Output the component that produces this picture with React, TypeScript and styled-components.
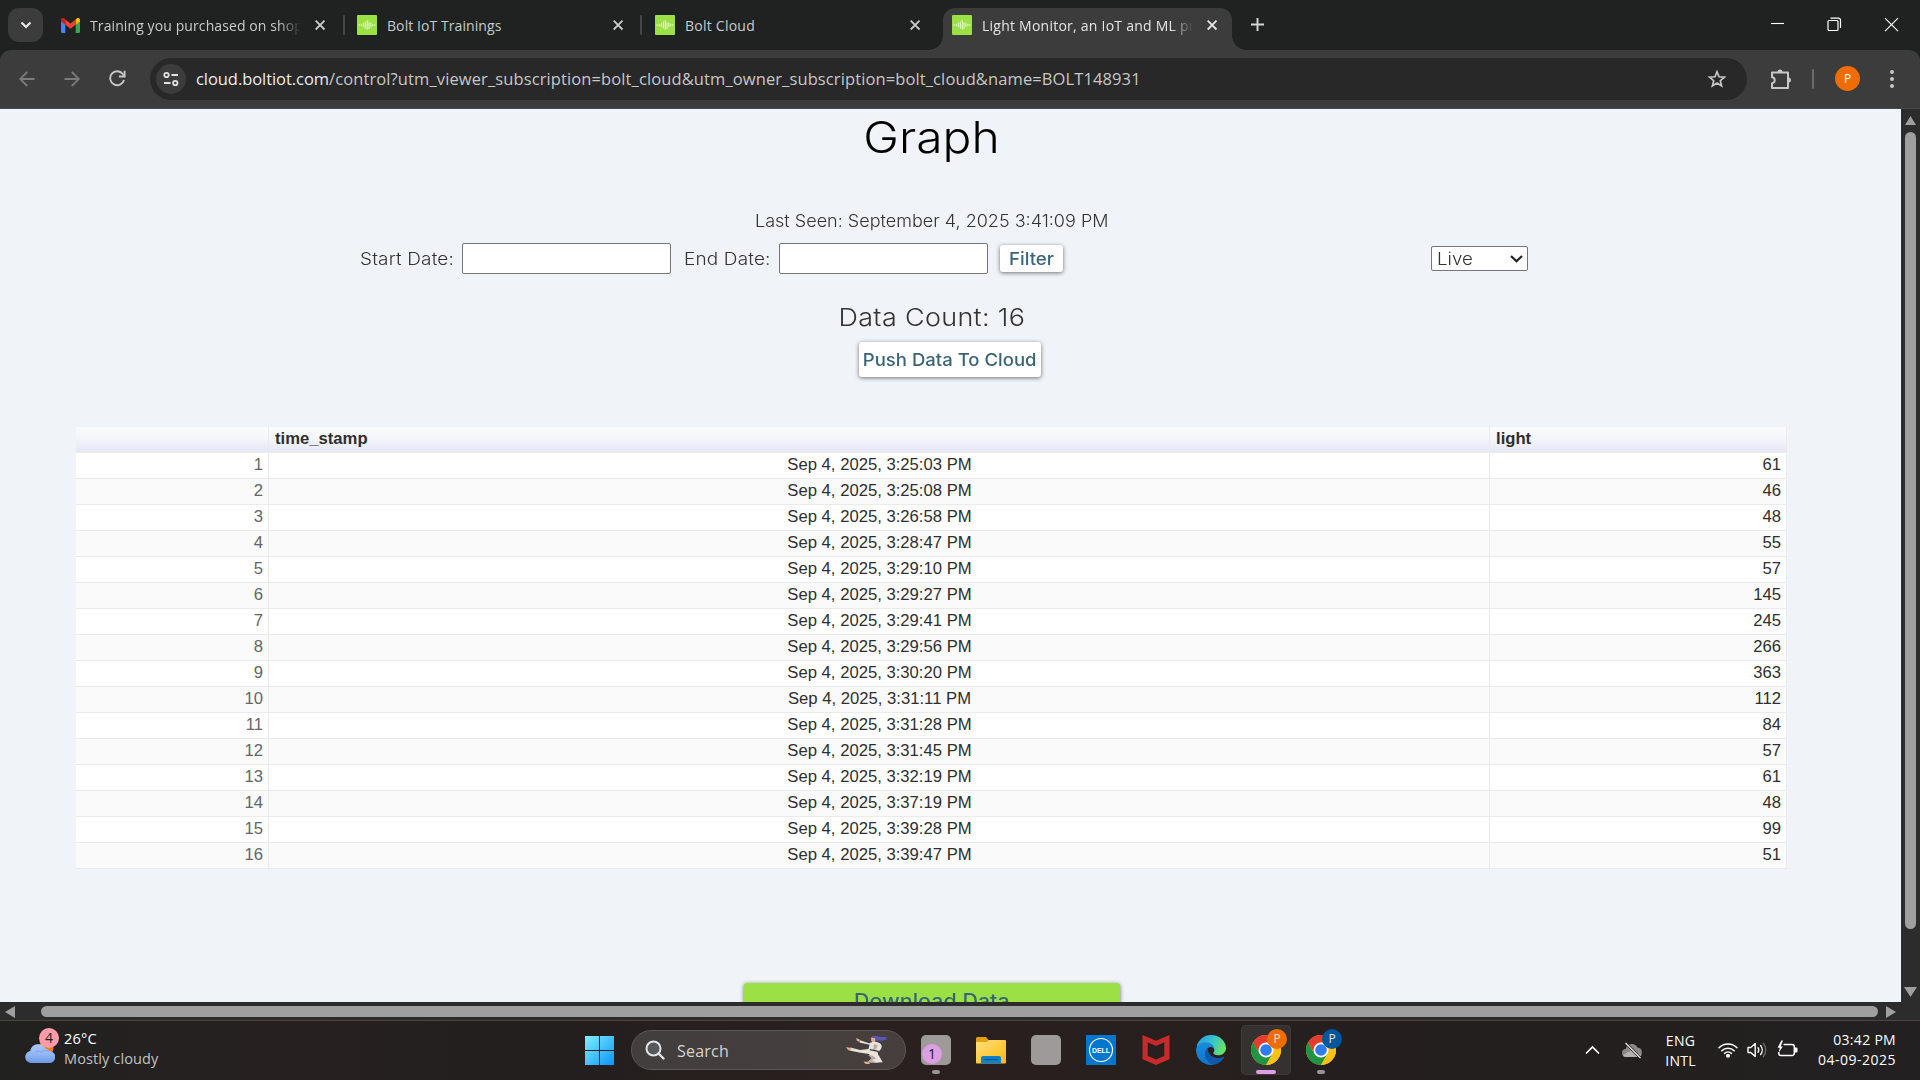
import React from "react";
import styled, { createGlobalStyle, css } from "styled-components";

const UI = `"Open Sans", "Noto Sans", sans-serif`;
const BODY = `Inter, "Open Sans", sans-serif`;

const GlobalStyle = createGlobalStyle`
  *, *::before, *::after { box-sizing: border-box; }
  html, body { margin: 0; padding: 0; background: #202221; overflow: hidden; }
  svg { display: block; flex: none; }
`;

const Screen = styled.div`
  width: 1920px;
  height: 1080px;
  display: flex;
  flex-direction: column;
  overflow: hidden;
  background: #202221;
  font-family: ${UI};
`;

/* ---------- tab strip ---------- */

const TabStrip = styled.header`
  flex: none;
  height: 50px;
  display: flex;
  align-items: flex-start;
  padding: 8px 0 0 8px;
`;

const TabSearch = styled.button`
  width: 35px;
  height: 34px;
  margin: 0 8px 0 0;
  padding: 0;
  border: 0;
  border-radius: 11px;
  background: #3c3c3c;
  display: grid;
  place-items: center;
`;

const Tab = styled.div<{ $width: number; $left: number; $right: number; $active?: boolean }>`
  position: relative;
  flex: none;
  width: ${(p) => p.$width}px;
  height: 42px;
  padding: 0 ${(p) => p.$right}px 8px ${(p) => p.$left}px;
  display: flex;
  align-items: center;
  color: #c9cac9;
  ${(p) =>
    p.$active
      ? css`
          background: #3c3c3c;
          color: #e6e6e6;
          border-radius: 12px 12px 0 0;
          &::before, &::after {
            content: "";
            position: absolute;
            bottom: 0;
            width: 14px;
            height: 14px;
          }
          &::before {
            left: -14px;
            background: radial-gradient(circle at 0 0, transparent 13.5px, #3c3c3c 14px);
          }
          &::after {
            right: -14px;
            background: radial-gradient(circle at 100% 0, transparent 13.5px, #3c3c3c 14px);
          }
        `
      : ""}
`;

const TabDivider = styled.i`
  flex: none;
  width: 2px;
  height: 20px;
  margin: 7px 0 0 -2px;
  border-radius: 1px;
  background: #454746;
`;

const TabTitle = styled.span<{ $spacing: number; $faded?: boolean }>`
  flex: 1;
  min-width: 0;
  margin: 1px 13px 0 10px;
  overflow: hidden;
  white-space: nowrap;
  font-size: 14px;
  line-height: 24px;
  letter-spacing: ${(p) => p.$spacing}px;
  ${(p) => (p.$faded ? "mask-image: linear-gradient(90deg, #000 calc(100% - 22px), transparent);" : "")}
`;

const NewTab = styled.button`
  margin: 9px 0 0 18px;
  padding: 0;
  border: 0;
  background: none;
  color: #d5d5d5;
`;

const WindowControls = styled.div`
  margin: 8px 21px 0 auto;
  display: flex;
  gap: 42px;
  color: #fff;
`;

/* ---------- toolbar ---------- */

const Toolbar = styled.div`
  flex: none;
  height: 59px;
  display: flex;
  align-items: center;
  padding: 0 21px 1px 16px;
  border-radius: 11px 11px 0 0;
  border-bottom: 1px solid #4a4a4a;
  background: #3c3c3c;
  color: #c7c7c7;
`;

const NavButtons = styled.div`
  display: flex;
  gap: 23px;
  margin-right: 22px;
`;

const NavButton = styled.span<{ $dim?: boolean }>`
  width: 22px;
  height: 22px;
  display: grid;
  place-items: center;
  color: ${(p) => (p.$dim ? "#7b7b7b" : "#c7c7c7")};
`;

const Omnibox = styled.div`
  flex: none;
  width: 1597px;
  height: 42px;
  display: flex;
  align-items: center;
  padding: 0 20px 0 6px;
  border-radius: 21px;
  background: #282828;
`;

const SiteInfo = styled.span`
  width: 30px;
  height: 30px;
  margin-right: 10px;
  border-radius: 50%;
  background: #3c3c3c;
  display: grid;
  place-items: center;
`;

const Url = styled.span`
  flex: 1;
  white-space: nowrap;
  font-size: 16.5px;
  line-height: 26px;
  letter-spacing: 0.11px;
  color: #c7c7c7;
`;

const Host = styled.span`
  letter-spacing: -0.06px;
  color: #ececec;
`;

const Extensions = styled.span`
  margin-left: 23px;
`;

const ToolbarDivider = styled.i`
  flex: none;
  width: 2px;
  height: 20px;
  margin: 0 21px 0 20px;
  border-radius: 1px;
  background: #6a6a6a;
`;

const Avatar = styled.span`
  flex: none;
  width: 25px;
  height: 25px;
  margin-right: auto;
  border-radius: 50%;
  background: #ef6c00;
  color: #fff;
  display: grid;
  place-items: center;
  font-size: 12px;
  line-height: 14px;
`;

const MenuDots = styled.span`
  margin-right: 5px;
`;

/* ---------- page ---------- */

const PageRow = styled.div`
  flex: none;
  height: 893px;
  display: flex;
  background: #2c2c2c;
`;

const Page = styled.main`
  width: 1901px;
  height: 893px;
  overflow: hidden;
  padding: 0 38px 0 0;
  display: flex;
  flex-direction: column;
  align-items: center;
  background: #f0f4f8;
  color: #333;
  font-family: ${BODY};
  font-weight: 300;
  font-size: 17px;
  & > * { flex: none; }
`;

/* Stretches a run of text to the broad proportions of the page's geometric face. */
const Wide = styled.span<{ $by: number; $from?: string }>`
  display: inline-block;
  white-space: nowrap;
  transform: scaleX(${(p) => p.$by});
  transform-origin: ${(p) => p.$from ?? "center"};
`;

const Title = styled.h1`
  margin: 0;
  height: 57px;
  font-size: 44px;
  font-weight: 300;
  line-height: 56px;
  color: #000;
`;

const LastSeen = styled.p`
  margin: 43px 0 9px;
  line-height: 25px;
`;

const FilterRow = styled.form`
  width: 1863px;
  height: 31px;
  padding-left: 360px;
  display: flex;
  align-items: center;
`;

const Label = styled.label<{ $width: number; $indent?: number }>`
  width: ${(p) => p.$width}px;
  padding-left: ${(p) => p.$indent ?? 0}px;
  white-space: nowrap;
  letter-spacing: 0.15px;
`;

const DateInput = styled.input`
  width: 209px;
  height: 31px;
  margin: 0;
  border: 1px solid #767676;
  border-radius: 2px;
  background: #fff;
`;

const RaisedButton = styled.button`
  padding: 0;
  border: 0;
  border-radius: 3px;
  background: #fff;
  box-shadow: 0 1px 4px rgba(0, 0, 0, 0.55);
  color: #3a6579;
  font-family: ${BODY};
  font-weight: 500;
  font-size: 17px;
  white-space: nowrap;
`;

const FilterButton = styled(RaisedButton)`
  width: 63px;
  height: 27px;
  margin: 0 0 0 12px;
`;

const Mode = styled.div`
  width: 97px;
  height: 25px;
  margin-left: 368px;
  padding: 0 4px 0 5px;
  display: flex;
  align-items: center;
  justify-content: space-between;
  border: 1px solid #767676;
  border-radius: 2px;
  background: #fff;
`;

const DataCount = styled.p`
  margin: 28px 0 10px;
  font-size: 24.5px;
  line-height: 30px;
  letter-spacing: 0.3px;
`;

const PushButton = styled(RaisedButton)`
  width: 182px;
  height: 35px;
  margin-left: 37px;
  display: flex;
  justify-content: center;
  align-items: center;
`;

const DownloadButton = styled(RaisedButton)`
  width: 376px;
  height: 36px;
  margin-top: 114px;
  background: #9be146;
  font-size: 19.5px;
`;

const Grid = styled.div`
  width: 1711px;
  margin-top: 50px;
  font-family: "Liberation Sans", Arial, sans-serif;
  font-weight: 400;
  font-size: 16.67px;
  line-height: 22px;
`;

const GridRow = styled.div<{ $even?: boolean; $head?: boolean }>`
  height: 26px;
  display: grid;
  grid-template-columns: 193px 1221px 297px;
  background: ${(p) =>
    p.$head ? "linear-gradient(#fafbfd 0%, #f5f6fb 45%, #e4e8f4 100%)" : p.$even ? "#fafafa" : "#fff"};
  border-bottom: 1px solid #ebebeb;
`;

const Cell = styled.div<{ $align?: string; $muted?: boolean; $bold?: boolean }>`
  padding: 1px 5px 0 6px;
  border-right: 1px solid #ebebeb;
  text-align: ${(p) => p.$align ?? "left"};
  color: ${(p) => (p.$muted ? "#666" : "#2f2f2f")};
  font-weight: ${(p) => (p.$bold ? 700 : 400)};
`;

/* ---------- scrollbars ---------- */

const VScroll = styled.div`
  width: 19px;
  display: flex;
  flex-direction: column;
  align-items: center;
  padding-top: 6px;
`;

const VThumb = styled.i`
  width: 11px;
  height: 797px;
  margin: 7px 0 58px;
  border-radius: 6px;
  background: #9f9f9f;
`;

const HScroll = styled.div`
  flex: none;
  height: 18px;
  display: flex;
  align-items: center;
  padding: 1px 0 0 5px;
  background: #2c2c2c;
`;

const HThumb = styled.i`
  width: 1837px;
  height: 11px;
  margin: 0 8px 0 26px;
  border-radius: 6px;
  background: #9f9f9f;
`;

/* ---------- taskbar ---------- */

const Taskbar = styled.footer`
  flex: none;
  height: 60px;
  display: flex;
  align-items: flex-start;
  border-top: 1px solid #474645;
  background: linear-gradient(90deg, #212120 0%, #262120 14%, #231f1e 28%, #2a201f 46%, #241f1e 72%, #222021 100%);
  color: #fff;
`;

const Weather = styled.div`
  width: 585px;
  display: flex;
  padding: 5px 0 0 25px;
`;

const WeatherIcon = styled.div`
  position: relative;
  width: 30px;
  height: 38px;
  padding-top: 8px;
  margin-right: 9px;
`;

const WeatherText = styled.div`
  padding-top: 3px;
`;

const Count = styled.span`
  position: absolute;
  left: 14px;
  top: 2px;
  width: 20px;
  height: 20px;
  border-radius: 50%;
  background: #ff9ca8;
  color: #222;
  font-size: 14px;
  line-height: 20px;
  text-align: center;
`;

const Stack = styled.div<{ $align?: string }>`
  display: flex;
  flex-direction: column;
  align-items: ${(p) => p.$align ?? "flex-start"};
`;

const Line = styled.span<{ $size?: number; $spacing?: number; $soft?: boolean }>`
  font-size: ${(p) => p.$size ?? 14}px;
  line-height: 20px;
  letter-spacing: ${(p) => p.$spacing ?? 0}px;
  color: ${(p) => (p.$soft ? "#c4c2c1" : "#fff")};
  white-space: nowrap;
`;

const Start = styled.div`
  padding-top: 15px;
`;

const SearchBox = styled.div`
  width: 275px;
  height: 40px;
  margin: 9px 0 0 17px;
  padding: 0 17px 0 13px;
  display: flex;
  align-items: center;
  border: 1px solid #5b5757;
  border-radius: 20px;
  background: linear-gradient(90deg, #423e3d, #463f3e);
`;

const SearchText = styled.span`
  flex: 1;
  margin: 1px 0 0 12px;
  color: #d6d4d3;
  font-size: 16px;
  letter-spacing: 0.22px;
`;

const TaskApp = styled.div<{ $active?: boolean }>`
  position: relative;
  width: 50px;
  height: 50px;
  margin: 4px 0 0 5px;
  padding-top: 10px;
  display: flex;
  flex-direction: column;
  align-items: center;
  border-radius: 5px;
  ${(p) => (p.$active ? "background: #353130; box-shadow: inset 0 0 0 1px #3f3b3a;" : "")}
`;

const Running = styled.i<{ $active?: boolean }>`
  width: ${(p) => (p.$active ? 20 : 8)}px;
  height: 4px;
  margin-top: 5px;
  border-radius: 2px;
  background: ${(p) => (p.$active ? "#dc9fe6" : "#999594")};
`;

const BlankApp = styled.span`
  width: 30px;
  height: 30px;
  border-radius: 5px;
  background: #9e9a99;
`;

const AppBadge = styled.span<{ $x: number; $y: number; $color: string; $dark?: boolean }>`
  position: absolute;
  left: ${(p) => p.$x}px;
  top: ${(p) => p.$y}px;
  width: 20px;
  height: 20px;
  border-radius: 50%;
  background: ${(p) => p.$color};
  color: ${(p) => (p.$dark ? "#221a22" : "#e8e4dc")};
  font-size: ${(p) => (p.$dark ? 14 : 12)}px;
  line-height: 20px;
  text-align: center;
`;

const Tray = styled.div`
  margin-left: auto;
  padding: 9px 24px 0 0;
  display: flex;
`;

const TrayItem = styled.div<{ $top: number; $gap: number }>`
  padding-top: ${(p) => p.$top}px;
  margin-right: ${(p) => p.$gap}px;
`;

/* ---------- drawings ---------- */

const Cross = () => (
  <svg width="12" height="12" viewBox="0 0 12 12" fill="none" stroke="currentColor" strokeWidth="1.8">
    <path d="M1.7 1.700l8.800 8.800M10.500 1.700l-8.800 8.800" />
  </svg>
);

const BoltIcon = () => (
  <svg width="20" height="20" viewBox="0 0 20 20">
    <rect width="20" height="20" rx="1" fill="#9be146" />
    <g stroke="#f4fbe6" strokeLinecap="round">
      <path strokeWidth="1.4" d="M2.2 10h.01M17.8 10h.01" />
      <path strokeWidth="0.9" d="M4.400 9.300v1.400M6.400 8.200v3.600M8.300 7v6M10.200 5.500v9M12 7.500v6M13.900 8.200v3.600M15.800 9.300v1.400" />
    </g>
  </svg>
);

const GmailIcon = () => (
  <svg width="19" height="15" viewBox="0 0 19 15">
    <path fill="#4285f4" d="M0 3v10.600A1.300 1.300 0 0 0 1.300 15h3V6z" />
    <path fill="#34a853" d="M14.700 15h3a1.300 1.300 0 0 0 1.300-1.400V3l-4.300 3z" />
    <path fill="#fbbc04" d="M14.700 1.500v5.300L19 3.600V2C19 .2 17-.8 15.600.5z" />
    <path fill="#c5221f" d="M0 2v1.600l4.300 3.200V1.500L3.400.5C2-.8 0 .2 0 2z" />
    <path fill="#ea4335" d="M4.300 6.800V1.500l5.200 3.900 5.200-3.900v5.300l-5.200 3.900z" />
  </svg>
);

const ChromeIcon = () => (
  <svg width="30" height="30" viewBox="0 0 48 48">
    <circle cx="24" cy="24" r="24" fill="#fbc116" />
    <path fill="#e33b2e" d="M3.200 12A24 24 0 0 1 44.800 12H24L13.600 30z" />
    <path fill="#229342" d="M3.200 12A24 24 0 0 0 24 48L34.400 30 24 24 13.600 30z" />
    <path fill="#fbc116" d="M24 48A24 24 0 0 0 44.800 12H24L34.400 30z" />
    <circle cx="24" cy="24" r="12" fill="#fff" />
    <circle cx="24" cy="24" r="9.300" fill="#2f7bf0" />
  </svg>
);

const EdgeIcon = () => (
  <svg width="30" height="30" viewBox="0 0 30 30">
    <defs>
      <linearGradient id="edgeTop" x1="0" y1="0.3" x2="1" y2="0.6">
        <stop offset="0" stopColor="#2a9fdc" />
        <stop offset="0.5" stopColor="#35c3cf" />
        <stop offset="1" stopColor="#6fe458" />
      </linearGradient>
      <linearGradient id="edgeLeft" x1="0.3" y1="0" x2="0.6" y2="1">
        <stop offset="0" stopColor="#1b8ddd" />
        <stop offset="1" stopColor="#0f72cf" />
      </linearGradient>
    </defs>
    <path fill="url(#edgeTop)" d="M.6 11.500C2.300 4.800 8 0 15 0c8.600 0 15 6.300 15 13 0 4.400-3.500 7.300-7.700 7.300-3.300 0-5-1.200-5-2.200 0-.7 1-1.200 1-3.100 0-3-3-5.600-7-5.600-4.600 0-8.300 1-10.700 2.100z" />
    <path fill="url(#edgeLeft)" d="M0 15C.2 10.500 4.500 7.200 9.500 7.200c5.200 0 8.800 3.300 8.800 7.300-.6-1.600-2-2.500-3.600-2.500-3 0-5.200 3.200-5.200 6.800 0 5 4 9.800 8.500 10.900C8.500 31.300 0 24.500 0 15z" />
    <path fill="#1058a8" d="M12 13.200C9.500 15 8.500 18 9 20.500 10 26 14.500 29.300 19 29.400c4-.9 7.200-3.400 9-6.700.4-.8-.2-1.200-.8-.9-1.500.8-3.200 1.200-5 1.200-5.500 0-10.200-3.600-10.200-8.200z" />
  </svg>
);

const FolderIcon = () => (
  <svg width="30" height="30" viewBox="0 0 30 30">
    <defs>
      <linearGradient id="folder" x1="0" y1="0" x2="1" y2="1">
        <stop offset="0" stopColor="#ffe07a" />
        <stop offset="1" stopColor="#fcb913" />
      </linearGradient>
    </defs>
    <path fill="#e0a010" d="M0 3.500A1.500 1.500 0 0 1 1.500 2H10l2.500 3H28v5H0z" />
    <path fill="url(#folder)" d="M0 7h10.500l2.500-2H29a1 1 0 0 1 1 1v21.500a1 1 0 0 1-1 1H1a1 1 0 0 1-1-1z" />
    <path fill="#127fcb" d="M5 28.500V23a2 2 0 0 1 2-2h16a2 2 0 0 1 2 2v5.500z" />
    <path stroke="#0b548c" strokeWidth="1.200" d="M8.500 24.500h13" />
  </svg>
);

const DellText = styled.text`
  font: 700 7.6px "Liberation Sans", Arial, sans-serif;
  fill: #fff;
`;

const DellIcon = () => (
  <svg width="30" height="30" viewBox="0 0 30 30">
    <rect width="30" height="30" fill="#0076ce" />
    <circle cx="15" cy="15" r="11.500" fill="none" stroke="#fff" strokeWidth="1.200" />
    <DellText x="15" y="17.700" textAnchor="middle" textLength="18" lengthAdjust="spacingAndGlyphs">DELL</DellText>
  </svg>
);

const ShieldIcon = () => (
  <svg width="30" height="30" viewBox="0 0 30 30">
    <path fill="#c62a2b" fillRule="evenodd" d="M1.500 0L15 5.800 28.500 0v24.200L15 30 1.500 24.200zM6.700 7.200v13.600L15 24.500l8.300-3.700V7.200L15 11z" />
  </svg>
);

const WindowsIcon = () => (
  <svg width="29" height="29" viewBox="0 0 29 29">
    <defs>
      <linearGradient id="win" gradientUnits="userSpaceOnUse" x1="0" y1="0" x2="29" y2="29">
        <stop offset="0" stopColor="#7ff0ff" />
        <stop offset="0.5" stopColor="#45c2fb" />
        <stop offset="1" stopColor="#0a93f8" />
      </linearGradient>
    </defs>
    <path fill="url(#win)" d="M0 0h14v14H0zM15 0h14v14H15zM0 15h14v14H0zM15 15h14v14H15z" />
  </svg>
);

const KickIcon = () => (
  <svg width="42" height="30" viewBox="0 0 42 30">
    <path fill="#5a56b4" d="M25 2.500C26.500.3 30 .2 32.500 1.500c3 .8 6 .3 8.800.6-2 .6-1.500 1.200-.3 1.700-2 1.800-5 2.300-8 1.800-2 .5-3.500.2-4.500-.7z" />
    <path fill="#e3ab88" d="M25.200 2.500l3.800.8.400 3.500-2.800.3-1.600-1.300z" />
    <path fill="#e9e3dd" d="M14 5.300l9 3 4.500-1.800c4 .3 7.500 1.700 8.200 4.200.4 2-2 5.500-3.700 6.500l1.500 4.500 3.200 5.600-3.700.2c-4 .6-8-.2-11.500.2l4-4.300-2.500-4.400-8.500-1.200-11-2.400.9-2.800L14 15l8.500-.9 1-4.300-10-2.200z" />
    <path fill="#b9a8a4" d="M22 20l4 .5 4.500 3-5 1.500 4 1.500-8 .5 4-3.800zM28 9l4 1.500-2.800 4.500-2-.3z" />
    <path stroke="#3a3435" strokeWidth="1.300" fill="none" d="M23.800 14.600l8.300 1.800 1 4" />
    <path fill="#e3ab88" d="M10.500 3l3.500 1.800-.6 2.300-3-1.800zM0 12l3.500.8 2 .2-.7 2.500-2.800-.6zM17.500 26.500l5 .2 1.500 2.300h-4.500z" />
  </svg>
);

const CloudIcon = () => (
  <svg width="30" height="29" viewBox="0 0 30 29">
    <defs>
      <linearGradient id="cloud" x1="0" y1="0" x2="0" y2="1">
        <stop offset="0" stopColor="#a9c8fb" />
        <stop offset="0.6" stopColor="#8fb4f4" />
        <stop offset="1" stopColor="#6c98e8" />
      </linearGradient>
    </defs>
    <circle cx="21" cy="14" r="7.500" fill="#f57c12" />
    <path fill="url(#cloud)" d="M6 29a6 6 0 0 1-.8-11.900A8.200 8.200 0 0 1 20.500 14.500 6.500 6.500 0 0 1 24.500 17 6 6 0 0 1 24 29z" />
    <path fill="none" stroke="#7ea6ee" strokeWidth="1" d="M10.500 18c2-1.500 5-1 6.500.7M16 19c1.500-2.600 5-3.700 8-2" />
  </svg>
);

const MutedCloud = () => (
  <svg width="21" height="17" viewBox="0 0 21 17">
    <path fill="#8b8988" d="M4.500 15a4 4 0 0 1-.8-8A6.300 6.300 0 0 1 15.500 5.500 4.800 4.800 0 0 1 16 15z" />
    <path fill="#b3b1b0" d="M1 13l9-5 9.500 5a4 4 0 0 1-3.500 2h-11A4 4 0 0 1 1 13z" />
    <path stroke="#242120" strokeWidth="2.600" d="M3.500 1L18.500 16" />
    <path stroke="#e8e8e8" strokeWidth="1.300" d="M3.500 1L18.500 16" />
  </svg>
);

const WifiIcon = () => (
  <svg width="20" height="16" viewBox="0 0 20 16" fill="none" stroke="#fff" strokeWidth="1.500" strokeLinecap="round">
    <path d="M1 5.800a12.800 12.800 0 0 1 18 0M3.800 8.700a8.800 8.800 0 0 1 12.400 0M6.600 11.400a4.900 4.900 0 0 1 6.800 0" />
    <circle cx="10" cy="13.800" r="1.300" fill="#fff" />
  </svg>
);

const SpeakerIcon = () => (
  <svg width="21" height="18" viewBox="0 0 21 18" fill="none" stroke="#fff" strokeWidth="1.400" strokeLinecap="round" strokeLinejoin="round">
    <path d="M1 6.500h2.800L8.200 2.500v13L3.800 11.500H1z" />
    <path d="M11 6.700a4 4 0 0 1 0 4.600M13.600 4.500a7 7 0 0 1 0 9" />
    <path stroke="#6b6968" d="M16.300 2.300a10.500 10.500 0 0 1 0 13.400" />
  </svg>
);

const BatteryIcon = () => (
  <svg width="21" height="18" viewBox="0 0 21 18" fill="none" stroke="#fff" strokeWidth="1.500">
    <path d="M6.500 4.500H15A2.300 2.300 0 0 1 17.300 6.800v6.400A2.300 2.300 0 0 1 15 15.500H4a2.300 2.300 0 0 1-2.300-2.300V12" />
    <path fill="#fff" stroke="none" d="M18 7.500h1.500q1 0 1 1v3q0 1-1 1H18zM4.300.5L.6 7.800h2.200L1.500 13 5.800 6.500H3.700L6 .5z" />
  </svg>
);

const Triangle = ({ dir }: { dir: "up" | "down" | "left" | "right" }) => {
  const d = {
    up: "M6.5 1L12 10H1z",
    down: "M0 0h13L6.500 10z",
    left: "M10 0v12L0 6z",
    right: "M0 0v12L10 6z",
  }[dir];
  const upright = dir === "up" || dir === "down";
  return (
    <svg width={upright ? 13 : 10} height={upright ? 10 : 12}>
      <path d={d} fill="#9f9f9f" />
    </svg>
  );
};

/* ---------- data ---------- */

const readings: [string, number][] = [
  ["3:25:03", 61], ["3:25:08", 46], ["3:26:58", 48], ["3:28:47", 55],
  ["3:29:10", 57], ["3:29:27", 145], ["3:29:41", 245], ["3:29:56", 266],
  ["3:30:20", 363], ["3:31:11", 112], ["3:31:28", 84], ["3:31:45", 57],
  ["3:32:19", 61], ["3:37:19", 48], ["3:39:28", 99], ["3:39:47", 51],
];

const BrowserTabs = () => (
  <TabStrip>
    <TabSearch>
      <svg width="12" height="8" viewBox="0 0 12 8" fill="none" stroke="#e8e8e8" strokeWidth="2.200">
        <path d="M1.500 1.500L6 6l4.500-4.500" />
      </svg>
    </TabSearch>
    <Tab $width={294} $left={10} $right={19}>
      <GmailIcon />
      <TabTitle $spacing={0.1} $faded>Training you purchased on shop</TabTitle>
      <Cross />
    </Tab>
    <TabDivider />
    <Tab $width={297} $left={12} $right={18}>
      <BoltIcon />
      <TabTitle $spacing={0.08}>Bolt IoT Trainings</TabTitle>
      <Cross />
    </Tab>
    <TabDivider />
    <Tab $width={301} $left={13} $right={22}>
      <BoltIcon />
      <TabTitle $spacing={0.24}>Bolt Cloud</TabTitle>
      <Cross />
    </Tab>
    <Tab $width={289} $left={9} $right={14} $active>
      <BoltIcon />
      <TabTitle $spacing={0.24} $faded>Light Monitor, an IoT and ML project</TabTitle>
      <Cross />
    </Tab>
    <NewTab>
      <svg width="15" height="15" viewBox="0 0 15 15" stroke="currentColor" strokeWidth="1.900">
        <path d="M7.500 1v13M1 7.500h13" />
      </svg>
    </NewTab>
    <WindowControls>
      <svg width="15" height="15" viewBox="0 0 15 15"><path d="M1 7.500h13" stroke="currentColor" strokeWidth="1.100" /></svg>
      <svg width="15" height="16" viewBox="0 0 15 16" fill="none" stroke="currentColor" strokeWidth="1.200">
        <rect x="1" y="4.500" width="10" height="10" rx="1" />
        <path d="M3.500 2.200H11.500a2 2 0 0 1 2 2V12" />
      </svg>
      <svg width="15" height="16" viewBox="0 0 15 16"><path d="M1 2.200L14 15.200M14 2.200L1 15.200" stroke="currentColor" strokeWidth="1.200" /></svg>
    </WindowControls>
  </TabStrip>
);

const AddressBar = () => (
  <Toolbar>
    <NavButtons>
      <NavButton $dim>
        <svg width="16" height="16" viewBox="0 0 16 16" fill="none" stroke="currentColor" strokeWidth="1.800"><path d="M15.500 8H1.500M8.200 1L1.200 8l7 7" /></svg>
      </NavButton>
      <NavButton $dim>
        <svg width="16" height="16" viewBox="0 0 16 16" fill="none" stroke="currentColor" strokeWidth="1.800"><path d="M.5 8h14M7.800 1l7 7-7 7" /></svg>
      </NavButton>
      <NavButton>
        <svg width="17" height="17" viewBox="0 0 17 17" fill="none" stroke="currentColor" strokeWidth="1.900">
          <path d="M15 10A7 7 0 1 1 13.800 4L15.500 6" />
          <path d="M15.600.8v5.700H9.900" />
        </svg>
      </NavButton>
    </NavButtons>
    <Omnibox>
      <SiteInfo>
        <svg width="16" height="16" viewBox="0 0 16 16" fill="none" stroke="#e3e3e3" strokeWidth="1.800">
          <circle cx="3.500" cy="4" r="2.200" />
          <path d="M8.500 4H15M1 12h6.500" />
          <circle cx="12.300" cy="12" r="2.200" />
        </svg>
      </SiteInfo>
      <Url>
        <Host>cloud.boltiot.com</Host>/control?utm_viewer_subscription=bolt_cloud&amp;utm_owner_subscription=bolt_cloud&amp;name=BOLT148931
      </Url>
      <svg width="20" height="20" viewBox="0 0 20 20" fill="none" stroke="#c7c7c7" strokeWidth="1.700">
        <path d="M10 2.800l2 5 5.400.4-4.100 3.500 1.300 5.300L10 14.100 5.400 17l1.300-5.300-4.100-3.500 5.400-.4z" />
      </svg>
    </Omnibox>
    <Extensions>
      <svg width="22" height="22" viewBox="0 0 22 22">
        <path fill="none" stroke="#c7c7c7" strokeWidth="2" strokeLinejoin="round" d="M2 4.500h16V20H2v-4.800c3.600-.2 3.600-5.700 0-5.900z" />
        <path fill="#c7c7c7" d="M7.500 4a2.500 2.500 0 0 1 5 0zM18.500 9.500a2.500 2.500 0 0 1 0 5z" />
      </svg>
    </Extensions>
    <ToolbarDivider />
    <Avatar>P</Avatar>
    <MenuDots>
      <svg width="4" height="20" viewBox="0 0 4 20" fill="#c7c7c7">
        <circle cx="2" cy="3" r="2" /><circle cx="2" cy="10" r="2" /><circle cx="2" cy="17" r="2" />
      </svg>
    </MenuDots>
  </Toolbar>
);

const DeviceData = () => (
  <Page>
    <Title><Wide $by={1.09}>Graph</Wide></Title>
    <LastSeen><Wide $by={1.06}>Last Seen: September 4, 2025 3:41:09 PM</Wide></LastSeen>
    <FilterRow>
      <Label $width={102}><Wide $by={1.115} $from="left">Start Date:</Wide></Label>
      <DateInput />
      <Label $width={108} $indent={13}><Wide $by={1.115} $from="left">End Date:</Wide></Label>
      <DateInput />
      <FilterButton type="button"><Wide $by={1.1}>Filter</Wide></FilterButton>
      <Mode>
        <Wide $by={1.1} $from="left">Live</Wide>
        <svg width="13" height="8" viewBox="0 0 13 8" fill="none" stroke="#222" strokeWidth="2.200"><path d="M1 1l5.500 5.200L12 1" /></svg>
      </Mode>
    </FilterRow>
    <DataCount><Wide $by={1.1}>Data Count: 16</Wide></DataCount>
    <PushButton><Wide $by={1.09}>Push Data To Cloud</Wide></PushButton>
    <Grid>
      <GridRow $head>
        <Cell />
        <Cell $bold>time_stamp</Cell>
        <Cell $bold>light</Cell>
      </GridRow>
      {readings.map(([time, light], i) => (
        <GridRow key={time} $even={i % 2 === 1}>
          <Cell $align="right" $muted>{i + 1}</Cell>
          <Cell $align="center">Sep 4, 2025, {time} PM</Cell>
          <Cell $align="right">{light}</Cell>
        </GridRow>
      ))}
    </Grid>
    <DownloadButton><Wide $by={1.1}>Download Data</Wide></DownloadButton>
  </Page>
);

const WindowsTaskbar = () => (
  <Taskbar>
    <Weather>
      <WeatherIcon>
        <CloudIcon />
        <Count>4</Count>
      </WeatherIcon>
      <WeatherText>
        <Stack>
          <Line $size={14.5} $spacing={0.2}>26°C</Line>
          <Line $size={14.5} $spacing={0.12} $soft>Mostly cloudy</Line>
        </Stack>
      </WeatherText>
    </Weather>
    <Start><WindowsIcon /></Start>
    <SearchBox>
      <svg width="20" height="20" viewBox="0 0 20 20" fill="none" stroke="#e4e4e4" strokeWidth="2">
        <circle cx="8.500" cy="8.500" r="7" fill="#57585c" />
        <path d="M13.500 13.500L18.500 18.500" strokeWidth="2.400" strokeLinecap="round" />
      </svg>
      <SearchText>Search</SearchText>
      <KickIcon />
    </SearchBox>
    <TaskApp>
      <BlankApp />
      <AppBadge $x={11} $y={19} $color="#dc9fe6" $dark>1</AppBadge>
      <Running />
    </TaskApp>
    <TaskApp><FolderIcon /></TaskApp>
    <TaskApp><BlankApp /></TaskApp>
    <TaskApp><DellIcon /></TaskApp>
    <TaskApp><ShieldIcon /></TaskApp>
    <TaskApp><EdgeIcon /></TaskApp>
    <TaskApp $active>
      <ChromeIcon />
      <AppBadge $x={26} $y={4} $color="#ef6c00">P</AppBadge>
      <Running $active />
    </TaskApp>
    <TaskApp>
      <ChromeIcon />
      <AppBadge $x={26} $y={4} $color="#01579b">P</AppBadge>
      <Running />
    </TaskApp>
    <Tray>
      <TrayItem $top={15} $gap={22}>
        <svg width="15" height="10" viewBox="0 0 15 10" fill="none" stroke="#fff" strokeWidth="1.700"><path d="M1 8.500l6.500-6.500L14 8.500" /></svg>
      </TrayItem>
      <TrayItem $top={12} $gap={22}><MutedCloud /></TrayItem>
      <TrayItem $top={1} $gap={22}>
        <Stack $align="center">
          <Line $spacing={0.4}>ENG</Line>
          <Line $spacing={0.3}>INTL</Line>
        </Stack>
      </TrayItem>
      <TrayItem $top={12} $gap={9}><WifiIcon /></TrayItem>
      <TrayItem $top={11} $gap={9}><SpeakerIcon /></TrayItem>
      <TrayItem $top={10} $gap={20}><BatteryIcon /></TrayItem>
      <Stack $align="flex-end">
        <Line $spacing={0.3}>03:42 PM</Line>
        <Line $spacing={0.5}>04-09-2025</Line>
      </Stack>
    </Tray>
  </Taskbar>
);

export default function App() {
  return (
    <Screen>
      <GlobalStyle />
      <BrowserTabs />
      <AddressBar />
      <PageRow>
        <DeviceData />
        <VScroll>
          <Triangle dir="up" />
          <VThumb />
          <Triangle dir="down" />
        </VScroll>
      </PageRow>
      <HScroll>
        <Triangle dir="left" />
        <HThumb />
        <Triangle dir="right" />
      </HScroll>
      <WindowsTaskbar />
    </Screen>
  );
}
